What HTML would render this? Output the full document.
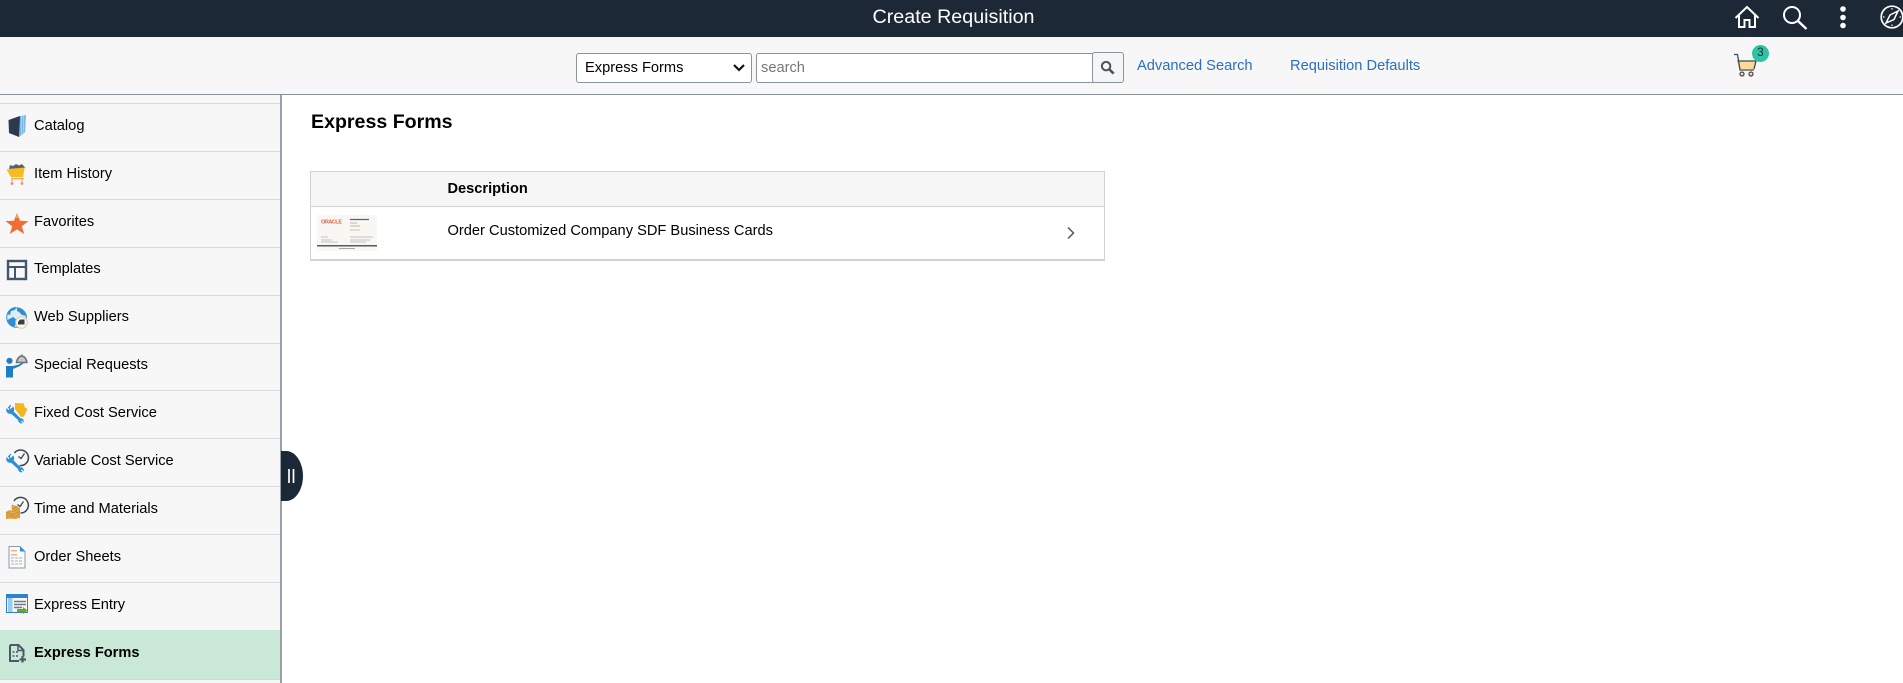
<!DOCTYPE html>
<html lang="en">
<head>
<meta charset="utf-8">
<title>Create Requisition</title>
<style>
html,body{margin:0;padding:0;width:1903px;height:683px;overflow:hidden;background:#fff;font-family:"Liberation Sans",Arial,sans-serif;color:#000}
div,a,span,svg{position:absolute;display:block}
#bar{left:0;top:0;width:1903px;height:37px;background:#1d2836}
#title{left:0;top:0;width:1907px;text-align:center;color:#fff;font-size:19.7px;line-height:35px}
#sub{left:0;top:37px;width:1903px;height:57px;background:#f7f7f7}
#rule{left:0;top:94px;width:1903px;height:1px;background:#8a9299}
#side{left:0;top:95px;width:280px;height:588px;background:#f7f7f7}
#sideb{left:280px;top:95px;width:2px;height:588px;background:#98a0aa}
.sep{left:0;width:280px;height:1px;background:#d6dade}
.lab{left:34px;font-size:14.65px;line-height:18px;white-space:nowrap}
#sel{left:576px;top:53px;width:174px;height:28px;border:1px solid #8a949e;border-radius:3px;background:#fff}
#seltxt{left:585px;top:59px;font-size:14.65px;line-height:18px;white-space:nowrap}
#inp{left:756px;top:53px;width:336px;height:28px;border:1px solid #8a949e;border-radius:3px 0 0 3px;background:#fff}
#ph{left:761px;top:59px;font-size:14.65px;line-height:18px;color:#767676}
#btn{left:1092px;top:52px;width:30px;height:29px;border:1px solid #8a949e;border-radius:3px;background:#f5f5f5}
.lnk{top:57px;font-size:14.65px;line-height:18px;color:#2a6fc0;white-space:nowrap}
h1{position:absolute;margin:0;left:311px;top:110px;font-size:19.6px;line-height:24px;font-weight:bold;white-space:nowrap}
#tbl{left:310px;top:171px;width:793px;height:87px;border:1px solid #cfd4da;border-bottom:2px solid #cfd4da;background:#fff}
#th{left:311px;top:172px;width:793px;height:34px;background:#f6f6f6}
#thl{left:311px;top:206px;width:793px;height:1px;background:#cfd4da}
#d1{left:447.500px;top:180px;font-size:14.6px;font-weight:bold;line-height:18px}
#d2{left:447.500px;top:222px;font-size:14.65px;line-height:18px;white-space:nowrap}
</style>
</head>
<body>
<div id="bar"></div>
<div id="title">Create Requisition</div>
<svg style="left:1734px;top:5px" width="26" height="24" viewBox="0 0 26 24" fill="none" stroke="#fff" stroke-width="2"><path d="M1.500 13 13 2l11.500 11M5 10v12h5.500v-7h5v7H21V10"/></svg>
<svg style="left:1782px;top:5px" width="27" height="25" viewBox="0 0 27 25" fill="none" stroke="#fff" stroke-width="2"><circle cx="10" cy="10" r="8"/><path d="M16 16l8.500 8" stroke-width="2.400"/></svg>
<svg style="left:1838px;top:6px" width="10" height="23" viewBox="0 0 10 23" fill="#fff"><circle cx="5" cy="3" r="2.800"/><circle cx="5" cy="11.500" r="2.800"/><circle cx="5" cy="19.500" r="2.800"/></svg>
<svg style="left:1880px;top:5px" width="23" height="24" viewBox="0 0 23 24" fill="none" stroke="#fff" stroke-width="1.700"><circle cx="12" cy="12" r="10.800"/><path d="M18 6l-4 8.500L6 18l4-8z" stroke-width="1.500"/><path d="M12 3v1.500M12 19.500V21M3 12h1.500M19.500 12H21" stroke-width="1.200"/></svg>

<div id="sub"></div>
<div id="rule"></div>
<div id="sel"></div>
<div id="seltxt">Express Forms</div>
<svg style="left:732px;top:63px" width="14" height="10" viewBox="0 0 14 10" fill="none" stroke="#111" stroke-width="2.200"><path d="M2 2l5 5 5-5"/></svg>
<div id="inp"></div>
<div id="ph">search</div>
<div id="btn"></div>
<svg style="left:1100px;top:60px" width="15" height="15" viewBox="0 0 16 16" fill="none" stroke="#4a535d" stroke-width="2.200"><circle cx="6.500" cy="6.500" r="4.500"/><path d="M10 10l4.500 4.500" stroke-width="2.800"/></svg>
<a class="lnk" style="left:1137px">Advanced Search</a>
<a class="lnk" style="left:1290px">Requisition Defaults</a>

<svg style="left:1733px;top:53px" width="25" height="25" viewBox="0 0 25 25"><path d="M4 8h19l-2 8H6z" fill="#fdd999"/><path d="M1 1.500h3.500L7 17h14M4.500 8H23l-2 8" fill="none" stroke="#3c4856" stroke-width="1.300"/><circle cx="9" cy="21" r="2" fill="#fdd999" stroke="#3c4856" stroke-width="1.200"/><circle cx="18" cy="21" r="2" fill="#fdd999" stroke="#3c4856" stroke-width="1.200"/></svg>
<div style="left:1752px;top:45px;width:17px;height:17px;border-radius:50%;background:#2fc3a5;color:#1d2836;font-size:11.500px;line-height:16px;text-align:center">3</div>

<div id="side"></div>
<div id="sideb"></div>
<div class="sep" style="top:103px"></div>
<div class="sep" style="top:151px"></div>
<div class="sep" style="top:199px"></div>
<div class="sep" style="top:247px"></div>
<div class="sep" style="top:295px"></div>
<div class="sep" style="top:343px"></div>
<div class="sep" style="top:390px"></div>
<div class="sep" style="top:438px"></div>
<div class="sep" style="top:486px"></div>
<div class="sep" style="top:534px"></div>
<div class="sep" style="top:582px"></div>
<div style="left:0;top:630px;width:280px;height:49px;background:#c9e8d7"></div>
<div style="left:0;top:679px;width:280px;height:1px;background:#d0d6dc"></div>

<div class="lab" style="top:117px">Catalog</div>
<div class="lab" style="top:165px">Item History</div>
<div class="lab" style="top:213px">Favorites</div>
<div class="lab" style="top:260px">Templates</div>
<div class="lab" style="top:308px">Web Suppliers</div>
<div class="lab" style="top:356px">Special Requests</div>
<div class="lab" style="top:404px">Fixed Cost Service</div>
<div class="lab" style="top:452px">Variable Cost Service</div>
<div class="lab" style="top:500px">Time and Materials</div>
<div class="lab" style="top:548px">Order Sheets</div>
<div class="lab" style="top:596px">Express Entry</div>
<div class="lab" style="top:644px;font-weight:bold;font-size:14.6px">Express Forms</div>

<svg style="left:0;top:100px" width="30" height="570" viewBox="0 0 30 570">
<!-- catalog -->
<path d="M19 16.500l7-1.500-.8 17-6.200 5z" fill="#7db9e8"/><path d="M21.500 16v18M23.500 15.500v17" stroke="#a9d3f2" stroke-width=".8"/><path d="M8.500 20l11.500-4-1 21-10-4z" fill="#2b3a4e"/>
<!-- item history -->
<path d="M6.500 69.500l20-2.500 1.500-1-3.500 2.200-1.500 9H11z" fill="#f5bd1f"/><path d="M9 69l1-4 3 1 3-2 3 1.500 3-1.500 3 3.500z" fill="#5c5f63"/><path d="M11 78h13v1.500H11z" fill="#eeb36a"/><path d="M12 79.500v3M22 79.500v3" stroke="#eeb36a" stroke-width="1.200"/><circle cx="12" cy="83.500" r="1.400" fill="#ec8c7a"/><circle cx="22" cy="83.500" r="1.400" fill="#ec8c7a"/>
<!-- favorites -->
<path d="M17 113l3 7.800 8.500.3-6.700 5.100 2.400 7.800-7.200-4.600-7.200 4.600 2.400-7.800-6.700-5.100 8.500-.3z" fill="#ef6e34"/><path d="M17 113l2 5h-4z" fill="#f0a050"/>
<!-- templates -->
<rect x="8" y="161" width="18" height="18" fill="#f7f7f7" stroke="#43566b" stroke-width="2.400"/><path d="M8 167h18M15 167v12" stroke="#43566b" stroke-width="2" fill="none"/>
<!-- web suppliers -->
<circle cx="16.500" cy="217.500" r="9.800" fill="#dcecf8" stroke="#2f8ed4" stroke-width="1"/><path d="M7 214c1-4 5-7 9-7l-1 3-4 1-1 4zM17 208c5 0 9 4 10 8l-5-1-3-3-2-1zM7.500 220l5.500-3 4 3-1.500 5-2 2c-3-1-5-4-6-7z" fill="#2f8ed4"/><circle cx="21.500" cy="222.500" r="5.800" fill="#f7f7f7" stroke="#f0c892" stroke-width="1"/><path d="M18 222l2-2.500h4.500v5H18z" fill="#33414f"/>
<!-- special requests -->
<circle cx="9.500" cy="260.800" r="3.100" fill="#217dc3"/><path d="M6 266h7l6-1.500 4-2.500 1 1-4 3-7 3v8.500H6z" fill="#217dc3"/><path d="M16.500 262.500c.5-4 3-6.500 5.200-6.500s4.800 2.500 5.200 6.500z" fill="#c4c7c9" stroke="#6d7276" stroke-width="1.500"/><path d="M21.700 254.500v2" stroke="#6d7276" stroke-width="1.500"/>
<!-- fixed cost -->
<path d="M15 303l9 .5 .5 3.500 3 2-1.500 3-2 4.500-3 .5-6-8z" fill="#f3b61f"/><path d="M11 305 8.500 307.500 10.700 309.700 13.200 307.400C13.900 309.100 13.700 310.500 12.900 311.500L20.500 319C22 318.500 23.300 319.800 23.300 321.300L21.800 319.800 20.300 321.300 21.800 322.800C20 323.100 18.500 321.500 18.700 319.900L11 313C9 313.800 6.300 312.500 6.800 309L8.700 310.800" fill="#2c8fd8" stroke="#2c8fd8" stroke-width="1"/>
<!-- variable cost -->
<path d="M14.500 353a7.800 7.800 0 1 1 5 12.500" fill="none" stroke="#3a4654" stroke-width="1.500"/><path d="M18.500 356.500l2.500 2 3.500-5" fill="none" stroke="#3a4654" stroke-width="1.300"/><path d="M11 354 8.500 356.500 10.700 358.700 13.200 356.400C13.900 358.100 13.700 359.500 12.900 360.500L20.500 368C22 367.500 23.300 368.800 23.300 370.300L21.800 368.800 20.300 370.300 21.800 371.800C20 372.100 18.500 370.500 18.700 368.900L11 362C9 362.800 6.300 361.500 6.800 358L8.700 359.800" fill="#2c8fd8" stroke="#2c8fd8" stroke-width="1"/>
<!-- time and materials -->
<path d="M14 401a7.800 7.800 0 1 1 6.500 12" fill="none" stroke="#3a4654" stroke-width="1.500"/><path d="M17.500 404.500l2.500 2 3.500-5" fill="none" stroke="#3a4654" stroke-width="1.300"/><path d="M12 405l5 1.500 3 1.500v10l-5 1-4-.5-5 .5v-7l3-1.800 3 .3z" fill="#dd9f3e"/><path d="M12 405l5 1.500-5 2zM6 412l6 1.500 8-1.500M12 413.500v5" fill="#eab35c" stroke="#c28630" stroke-width=".6"/>
<!-- order sheets -->
<path d="M9 446.500h11l5 5v16.500H9z" fill="#fbfbfb" stroke="#8d99a7" stroke-width="1"/><path d="M20 446.500l5 5h-5z" fill="#2f8ed4"/><path d="M11 450h6v1.500h-6zM11 454h6v1.500h-6z" fill="#eab48c"/><path d="M11 458h12M11 461h12M11 464h12" stroke="#b9bec4" stroke-width="1.200" stroke-dasharray="3 1"/>
<!-- express entry -->
<rect x="6.500" y="494.500" width="21" height="18" fill="#f7f7f7" stroke="#2f83ca" stroke-width="1"/><path d="M6 494h22v4H6z" fill="#2f83ca"/><path d="M8 498h4.500v14H8z" fill="#9ccbee"/><path d="M14 501.500h12M14 504.500h12M14 507.500h8" stroke="#6e7c89" stroke-width="1.400"/><path d="M17 509h6v-2l4.500 3.500-4.500 3.500v-2h-6z" fill="#6aa51c"/>
<!-- express forms -->
<path d="M10 545h8.500l5 5v6.500M19 561H10v-16" fill="none" stroke="#4c5866" stroke-width="2"/><path d="M18 545v5.500h5" fill="none" stroke="#4c5866" stroke-width="1.500"/><path d="M12.500 552h2M16 552h2M12.500 556h2M16 556h2" stroke="#4c5866" stroke-width="1.500"/><path d="M22.500 556v6.500M19.500 559.500h6.500" stroke="#4c5866" stroke-width="2.200"/>
</svg>

<svg style="left:281px;top:451px" width="22" height="50" viewBox="0 0 22 50"><path d="M0 0h5c10 0 17 12 17 25S15 50 5 50H0z" fill="#1d2836"/><path d="M8 18v14M12.500 18v14" stroke="#fff" stroke-width="1.700"/></svg>

<h1>Express Forms</h1>
<div id="tbl"></div>
<div id="th"></div>
<div id="thl"></div>
<div id="d1">Description</div>
<div id="d2">Order Customized Company SDF Business Cards</div>
<svg style="left:1066px;top:226px" width="10" height="14" viewBox="0 0 10 14" fill="none" stroke="#55595e" stroke-width="1.500"><path d="M2 1.500 7.500 7 2 12.500"/></svg>

<svg style="left:317px;top:215px" width="60" height="36" viewBox="0 0 60 36">
<rect width="60" height="36" fill="#f9f7f4"/>
<text x="4" y="8.500" font-family="Liberation Sans, sans-serif" font-size="5.500" font-weight="bold" fill="#e8633a" textLength="21">ORACLE</text>
<path d="M33 4.500h19" stroke="#5c6270" stroke-width="1.300"/>
<path d="M33 8h7M33 11h10" stroke="#c9b68f" stroke-width="1"/>
<path d="M33 15h10M33 22h23M33 25h20M33 27h16M4 22h7M4 25h11M4 27h17" stroke="#c5c3c0" stroke-width="1"/>
<rect y="30" width="60" height="1.500" fill="#5a5a52"/>
<path d="M22 33.500h16" stroke="#a9a6a2" stroke-width="1"/>
</svg>
</body>
</html>
